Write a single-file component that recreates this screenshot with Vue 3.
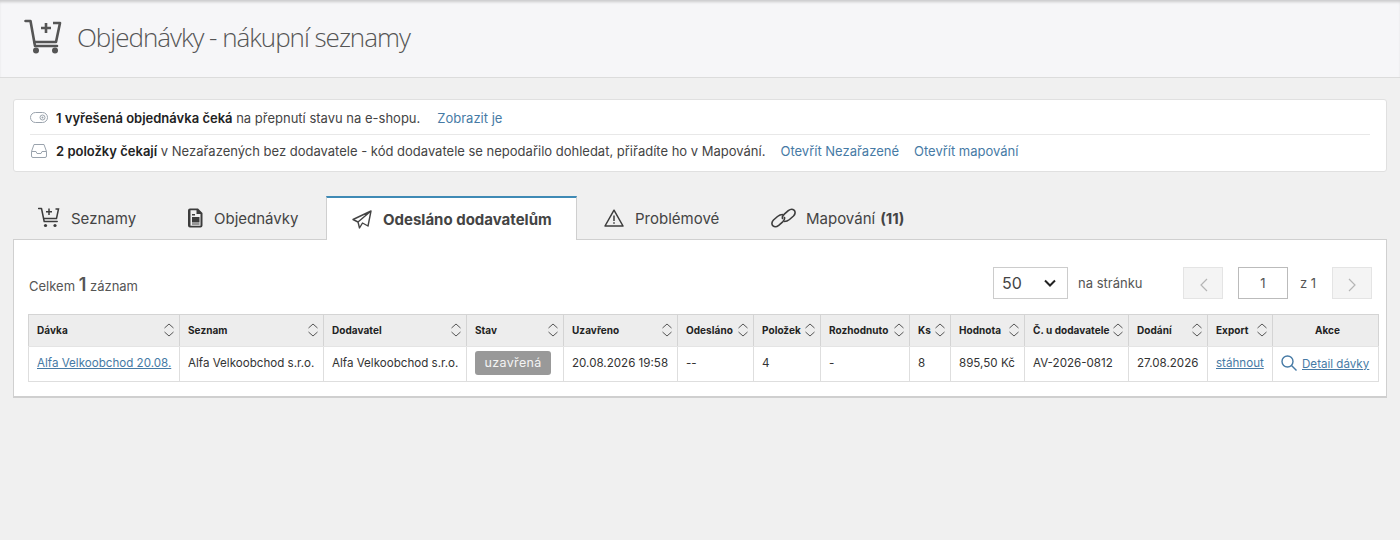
<script setup>
const tabs = [
  { key: 'seznamy', label: 'Seznamy' },
  { key: 'objednavky', label: 'Objednávky' },
  { key: 'odeslano', label: 'Odesláno dodavatelům', active: true },
  { key: 'problemove', label: 'Problémové' },
  { key: 'mapovani', label: 'Mapování', count: '(11)' }
]

const columns = [
  { label: 'Dávka', width: 151 },
  { label: 'Seznam', width: 144 },
  { label: 'Dodavatel', width: 143 },
  { label: 'Stav', width: 97 },
  { label: 'Uzavřeno', width: 114 },
  { label: 'Odesláno', width: 76 },
  { label: 'Položek', width: 67 },
  { label: 'Rozhodnuto', width: 89 },
  { label: 'Ks', width: 41 },
  { label: 'Hodnota', width: 74 },
  { label: 'Č. u dodavatele', width: 104 },
  { label: 'Dodání', width: 79 },
  { label: 'Export', width: 65 },
  { label: 'Akce', width: 106, plain: true }
]
</script>

<template>
  <div class="page">
    <header class="page-head">
      <svg class="head-icon" width="38" height="38" viewBox="0 0 38 38" fill="none" stroke="#555" stroke-width="2.600">
        <path d="M1.500 2h5l4.500 25h22" stroke-linecap="round" stroke-linejoin="round" />
        <path d="M9 23h23l4-19h-7" stroke-linejoin="round" />
        <path d="M22 4v10M17 9h10" />
        <circle cx="12" cy="31.500" r="3" fill="#555" stroke="none" />
        <circle cx="31" cy="31.500" r="3" fill="#555" stroke="none" />
      </svg>
      <h1>Objednávky - nákupní seznamy</h1>
    </header>

    <section class="notices">
      <div class="notice">
        <svg width="18" height="11" viewBox="0 0 18 11" fill="none" stroke="#9aa3ad">
          <rect x="0.500" y="0.500" width="17" height="10" rx="5" />
          <circle cx="12.500" cy="5.500" r="2.500" />
          <circle cx="12.500" cy="5.500" r="1" fill="#9aa3ad" stroke="none" />
        </svg>
        <p><b>1 vyřešená objednávka čeká</b> na přepnutí stavu na e-shopu.</p>
        <a>Zobrazit je</a>
      </div>
      <div class="notice">
        <svg width="16" height="14" viewBox="0 0 16 14" fill="none" stroke="#9aa3ad" stroke-linejoin="round">
          <path d="M3 .5h10l2.500 7V12a1.500 1.500 0 0 1-1.500 1.500H2A1.500 1.500 0 0 1 .5 12V7.500z" />
          <path d="M.5 7.500h4.500l1 2h4l1-2h4.500" />
        </svg>
        <p><b>2 položky čekají</b> v Nezařazených bez dodavatele - kód dodavatele se nepodařilo dohledat, přiřadíte ho v Mapování.</p>
        <a>Otevřít Nezařazené</a>
        <a>Otevřít mapování</a>
      </div>
    </section>

    <nav class="tabs">
      <div v-for="tab in tabs" :key="tab.key" class="tab" :class="[tab.key, { active: tab.active }]">
        <svg v-if="tab.key === 'seznamy'" width="22" height="22" viewBox="0 0 22 22" fill="none" stroke="#3c3c3c" stroke-width="1.500">
          <path d="M.5 1.500h3l2.700 13h13" stroke-linecap="round" stroke-linejoin="round" />
          <path d="M5 11.500h13.500l2-9.500h-3" />
          <path d="M11 1.500v6.500M8 4.700h6" />
          <circle cx="7.500" cy="18.500" r="1.600" fill="#3c3c3c" stroke="none" />
          <circle cx="17" cy="18.500" r="1.600" fill="#3c3c3c" stroke="none" />
        </svg>
        <svg v-else-if="tab.key === 'objednavky'" width="15" height="20" viewBox="0 0 15 20">
          <path fill="#3c3c3c" fill-rule="evenodd" d="M2 .5h8l4.500 4.500v12.500a2 2 0 0 1-2 2h-10.500a2 2 0 0 1-2-2v-15a2 2 0 0 1 2-2zM2.500 2.200v15.600h10v-11.800h-4v-3.800zM4 9h7.500v5.500h-7.500zM4 6h3v1.400h-3zM4 15.500h7.500v1h-7.500z" />
        </svg>
        <svg v-else-if="tab.key === 'odeslano'" width="20" height="19" viewBox="0 0 20 19" fill="none" stroke="#444" stroke-width="1.400" stroke-linejoin="round">
          <path d="M19 1 1 9.500l5 2.500L19 1l-3 15-5.500-3L7.500 18 6 12" />
        </svg>
        <svg v-else-if="tab.key === 'problemove'" width="20" height="18" viewBox="0 0 20 18" fill="none" stroke="#3c3c3c" stroke-width="1.500" stroke-linejoin="round">
          <path d="M10 1.200 19 17H1z" />
          <path d="M10 6.500v5.500M10 13.300v1.500" />
        </svg>
        <svg v-else width="25" height="20" viewBox="0 0 25 20" fill="none" stroke="#3c3c3c" stroke-width="1.600">
          <path d="M11.500 6.500C9.500 6.500 8 7.300 6.500 8.500l-4 3.500c-2 2-2 4.500-.5 5.800 1.500 1.300 3.800 1 5.700-.5l4-3.500c1.300-1.200 2.200-2.800 1.800-4.300" stroke-linecap="round" />
          <path d="M13.500 13.500c2 0 3.500-.8 5-2l4-3.500c2-2 2-4.500.5-5.800-1.500-1.300-3.800-1-5.700.5l-4 3.500c-1.300 1.200-2.200 2.800-1.800 4.300" stroke-linecap="round" />
        </svg>
        <span>{{ tab.label }}<b v-if="tab.count" class="count">{{ tab.count }}</b></span>
      </div>
    </nav>

    <section class="panel">
      <div class="toolbar">
        <div class="total">Celkem <b>1</b> záznam</div>
        <div class="pager">
          <div class="per-page">
            <span>50</span>
            <svg width="12" height="8" viewBox="0 0 12 8" fill="none" stroke="#222" stroke-width="2">
              <path d="m1 1.500 5 5 5-5" />
            </svg>
          </div>
          <span class="per-label">na stránku</span>
          <button class="page-btn prev">
            <svg width="9" height="14" viewBox="0 0 9 14" fill="none" stroke="#b5b5b5" stroke-width="1.200"><path d="M8 1 2 7l6 6" /></svg>
          </button>
          <div class="page-input">1</div>
          <span class="page-of">z 1</span>
          <button class="page-btn">
            <svg width="9" height="14" viewBox="0 0 9 14" fill="none" stroke="#b5b5b5" stroke-width="1.200"><path d="m1 1 6 6-6 6" /></svg>
          </button>
        </div>
      </div>

      <table class="grid">
        <colgroup>
          <col v-for="col in columns" :key="col.label" :style="{ width: col.width + 'px' }" />
        </colgroup>
        <thead>
          <tr>
            <th v-for="col in columns" :key="col.label" :class="{ plain: col.plain }">
              <div class="th-in">
                <span>{{ col.label }}</span>
                <svg v-if="!col.plain" width="12" height="14" viewBox="0 0 12 14" fill="none" stroke="#555" stroke-width="1">
                  <path d="m1.500 5 4.500-4 4.500 4M1.500 9l4.500 4 4.500-4" />
                </svg>
              </div>
            </th>
          </tr>
        </thead>
        <tbody>
          <tr>
            <td><a>Alfa Velkoobchod 20.08.</a></td>
            <td>Alfa Velkoobchod s.r.o.</td>
            <td>Alfa Velkoobchod s.r.o.</td>
            <td><span class="badge">uzavřená</span></td>
            <td>20.08.2026 19:58</td>
            <td>--</td>
            <td>4</td>
            <td>-</td>
            <td>8</td>
            <td>895,50 Kč</td>
            <td>AV-2026-0812</td>
            <td>27.08.2026</td>
            <td><a>stáhnout</a></td>
            <td class="actions">
              <svg width="16" height="16" viewBox="0 0 16 16" fill="none" stroke="#467aa5" stroke-width="1.400">
                <circle cx="6.500" cy="6.500" r="5.500" />
                <path d="m10.500 10.500 5 5" />
              </svg>
              <a>Detail dávky</a>
            </td>
          </tr>
        </tbody>
      </table>
    </section>
  </div>
</template>

<style>
html, body {
  background: #f0f0f0;
}
</style>

<style scoped>
.page {
  min-height: 540px;
  font-family: Inter, "Liberation Sans", sans-serif;
  font-size: 13px;
  color: #333;
}

.page-head {
  display: flex;
  align-items: center;
  height: 77px;
  padding: 0 24px;
  background: #f6f6f8;
  border-bottom: 1px solid #dcdcdc;
  box-shadow: inset 0 3px 3px -1px rgba(0, 0, 0, 0.18);
}

.head-icon {
  margin-top: -1px;
}

.page-head h1 {
  margin: -3px 0 0 15px;
  font-family: "Open Sans", sans-serif;
  font-size: 26px;
  font-weight: 300;
  letter-spacing: -1.02px;
  color: #555;
}

.notices {
  margin: 21px 13px 0;
  padding: 1px 16px 4px;
  background: #fff;
  border: 1px solid #e0e0e0;
  border-radius: 3px;
}

.notice {
  display: flex;
  align-items: center;
  height: 33px;
}

.notice + .notice {
  border-top: 1px solid #e8e8e8;
  height: 32px;
}

.notice svg {
  width: 18px;
  margin-right: 8px;
  flex-shrink: 0;
}

.notice p {
  margin: 0;
  color: #444;
}

.notice p b {
  color: #222;
  font-weight: 600;
}

.notice a {
  margin-left: 15px;
  color: #467aa5;
}

.notice:first-child a {
  margin-left: 17px;
}

.tabs {
  display: flex;
  margin: 24px 13px -1px;
  height: 44px;
  position: relative;
}

.tab {
  display: flex;
  align-items: center;
  gap: 11px;
  font-size: 15px;
  color: #444;
  box-sizing: border-box;
}

.tab b {
  font-weight: 700;
}

.tab .count {
  margin-left: 5px;
}

.tab.seznamy {
  width: 148px;
  padding-left: 25px;
}

.tab.objednavky {
  width: 165px;
  padding-left: 27px;
}

.tab.odeslano {
  width: 251px;
  padding-left: 25px;
  background: #fff;
  border: 1px solid #cfcfcf;
  border-top: 2px solid #3f8ab5;
  border-bottom: none;
  font-weight: 700;
  position: relative;
  z-index: 1;
}

.tab.problemove {
  width: 167px;
  padding-left: 27px;
}

.tab.mapovani {
  padding-left: 27px;
  gap: 10px;
}

.panel {
  margin: 0 13px;
  padding: 0 8px 14px 14px;
  background: #fff;
  border: 1px solid #d0d0d0;
  border-bottom: 2px solid #cfcfcf;
}

.toolbar {
  display: flex;
  justify-content: space-between;
  align-items: flex-end;
  height: 60px;
  margin-right: 6px;
}

.total {
  padding-left: 1px;
  color: #555;
  line-height: 20px;
  margin-bottom: 4px;
}

.total b {
  font-size: 18px;
  font-weight: 600;
}

.pager {
  display: flex;
  align-items: center;
  margin-bottom: 1px;
}

.per-page {
  display: flex;
  align-items: center;
  justify-content: space-between;
  width: 75px;
  height: 32px;
  box-sizing: border-box;
  padding: 0 11px 0 8px;
  border: 1px solid #ccc;
  font-size: 16px;
  color: #444;
}

.per-label {
  margin-left: 10px;
  color: #555;
  width: 65px;
}

.page-btn {
  display: flex;
  align-items: center;
  justify-content: center;
  width: 40px;
  height: 32px;
  padding: 4px 0 0;
  background: #f4f4f4;
  border: 1px solid #e4e4e4;
}

.prev {
  margin-left: 40px;
}

.page-input {
  width: 50px;
  height: 32px;
  margin-left: 15px;
  box-sizing: border-box;
  border: 1px solid #bbb;
  text-align: center;
  line-height: 30px;
  color: #555;
}

.page-of {
  width: 44px;
  padding-left: 12px;
  box-sizing: border-box;
  color: #555;
}

.grid {
  width: 1350px;
  margin-top: 14px;
  border-collapse: collapse;
  table-layout: fixed;
}

.grid th {
  box-sizing: border-box;
  height: 32px;
  padding: 0 4px 1px 8px;
  background: #ededed;
  border: 1px solid #d4d4d4;
  border-bottom: 1px solid #e4e4e4;
  font-size: 10px;
  font-weight: 700;
  letter-spacing: 0.05px;
  color: #222;
  text-align: left;
  white-space: nowrap;
}

.th-in {
  display: flex;
  align-items: center;
  justify-content: space-between;
}

.grid th.plain .th-in {
  justify-content: center;
}

.grid td {
  box-sizing: border-box;
  height: 35px;
  padding: 0 8px 2px;
  border: 1px solid #dedede;
  font-size: 11.600px;
  color: #333;
  white-space: nowrap;
}

.grid a {
  color: #467aa5;
  text-decoration: underline;
}

.badge {
  display: inline-block;
  padding: 0 9.500px;
  height: 24px;
  line-height: 24px;
  border-radius: 3px;
  background: #999;
  color: #f4f4f4;
  font-size: 12.500px;
  letter-spacing: 0.35px;
}

.actions svg {
  vertical-align: -3px;
  margin-right: 5px;
}
</style>
